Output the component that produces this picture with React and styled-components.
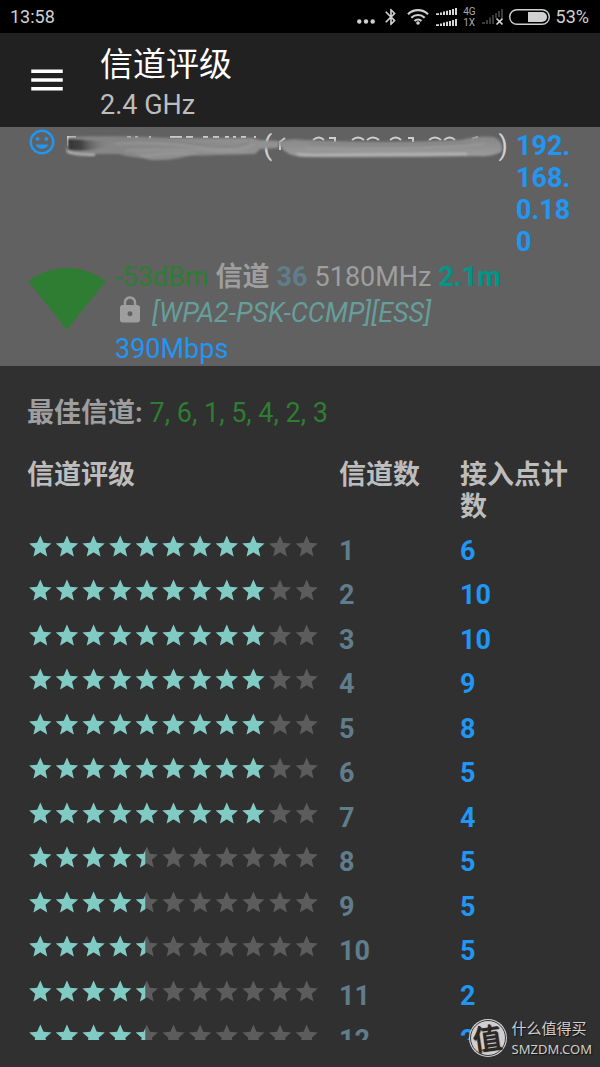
import React from 'react';
import styled, { createGlobalStyle } from 'styled-components';
import { MdBluetooth, MdInsertEmoticon, MdLock, MdMenu, MdSignalWifi4Bar } from 'react-icons/md';

const GlobalStyle = createGlobalStyle`
    * {
        box-sizing: border-box;
    }

    body {
        margin: 0;
        background: #303030;
        color: #bdbdbd;
        font-family: Roboto, 'Noto Sans CJK SC', sans-serif;
        font-size: 27px;
        line-height: 32px;
    }

    svg {
        display: block;
        flex: none;
    }
`;

const Screen = styled.div`
    position: relative;
    display: flex;
    flex-direction: column;
    height: 100vh;
    overflow: hidden;
`;

const StatusBar = styled.div`
    display: flex;
    flex: none;
    align-items: center;
    justify-content: space-between;
    height: 33px;
    padding: 0 11px 0 10px;
    background: #000;
    color: #d0d0d0;
    font-size: 18px;
`;

const StatusIcons = styled.div`
    display: flex;
    align-items: center;
    gap: 6px;
`;

const NetworkLabels = styled.div`
    color: #a8a8a8;
    font-size: 10px;
    line-height: 11px;
`;

const AppBar = styled.header`
    display: flex;
    flex: none;
    align-items: center;
    gap: 32px;
    height: 94px;
    padding-left: 26px;
    background: #212121;
`;

const MenuButton = styled.button`
    padding: 0;
    border: 0;
    background: none;
    color: #fff;
`;

const Heading = styled.div`
    padding-top: 6px;
`;

const Title = styled.h1`
    margin: 0;
    color: #fff;
    font-size: 33px;
    font-weight: 400;
    line-height: 44px;
`;

const Subtitle = styled.p`
    margin: 0;
    font-size: 27px;
    line-height: 36px;
`;

const Connection = styled.section`
    flex: none;
    height: 239px;
    padding: 0 27px;
    overflow: hidden;
    background: #616161;
`;

const NameRow = styled.div`
    display: flex;
    gap: 8px;
    color: #2196f3;
`;

const NetworkName = styled.div`
    position: relative;
    display: flex;
    flex: 1;
    justify-content: space-between;
    padding: 3px 0 0 198px;
    color: #d0d0d0;
`;

const Smear = styled.svg`
    position: absolute;
    top: 4px;
    left: 0;
    width: 100%;
`;

const IpAddress = styled.div`
    width: 57px;
    padding-top: 3px;
    font-weight: 700;
    word-break: break-all;
`;

const DetailRow = styled.div`
    display: flex;
    gap: 8px;
    color: #2e7d32;
`;

const Details = styled.div`
    padding-top: 1px;
    line-height: 36px;
`;

const DetailLine = styled.div`
    display: flex;
    align-items: center;
    gap: 7px;
    white-space: nowrap;
`;

const LockIcon = styled(MdLock)`
    align-self: flex-start;
    color: #9e9e9e;
`;

const Value = styled.span`
    color: ${({ $color }) => $color || '#9e9e9e'};
    font-weight: ${({ $bold }) => ($bold ? 700 : 400)};
    font-style: ${({ $italic }) => ($italic ? 'italic' : 'normal')};
`;

const Rating = styled.main`
    flex: 1;
    min-height: 0;
    margin-bottom: 27px;
    padding: 31px 27px 0;
    overflow: hidden;
`;

const BestChannels = styled.p`
    display: flex;
    gap: 7px;
    margin: 0 0 30px;
`;

const Table = styled.table`
    width: 100%;
    border-collapse: collapse;
    table-layout: fixed;

    th,
    td {
        padding: 0;
        text-align: left;
        vertical-align: top;
    }

    th {
        padding-bottom: 10px;
        font-weight: 700;
    }

    tbody tr {
        height: 44px;
    }

    tbody tr:nth-child(even) {
        height: 45px;
    }
`;

const Column = styled.col`
    width: ${({ $width }) => $width};
`;

const NumberCell = styled.td`
    color: ${({ $color }) => $color};
    font-weight: 700;

    && {
        padding-top: 2px;
    }
`;

const Watermark = styled.div`
    position: absolute;
    right: 8px;
    bottom: 8px;
    display: flex;
    align-items: center;
    gap: 4px;
    color: #cfcfcf;
    font-size: 15px;
    line-height: 20px;
    text-shadow: 1px 1px 1px #111;
`;

const WatermarkDomain = styled.div`
    font-family: 'Noto Sans', sans-serif;
    font-size: 13px;
`;

const BEST = [7, 6, 1, 5, 4, 2, 3];

const CHANNELS = [
    { channel: 1, stars: 9, count: 6 },
    { channel: 2, stars: 9, count: 10 },
    { channel: 3, stars: 9, count: 10 },
    { channel: 4, stars: 9, count: 9 },
    { channel: 5, stars: 9, count: 8 },
    { channel: 6, stars: 9, count: 5 },
    { channel: 7, stars: 9, count: 4 },
    { channel: 8, stars: 4.44, count: 5 },
    { channel: 9, stars: 4.44, count: 5 },
    { channel: 10, stars: 4.44, count: 5 },
    { channel: 11, stars: 4.44, count: 2 },
    { channel: 12, stars: 4.44, count: 2 },
];

const STAR = 'M12 17.27L18.18 21l-1.64-7.03L22 9.24l-7.19-.61L12 2 9.19 8.63 2 9.24l5.46 4.73L5.82 21z';
const STAR_COUNT = 11;

const Stars = ({ id, value }) => {
    const stars = Array.from({ length: STAR_COUNT }, (_, i) => (
        <path key={i} d={STAR} transform={`translate(${i * 24} 0)`} />
    ));

    return (
        <svg width="293" height="27" viewBox="0 0 264 24" role="img" aria-label={`${value} / ${STAR_COUNT}`}>
            <clipPath id={id}>
                <rect width={value * 24} height="24" />
            </clipPath>
            <g fill="#5c5c5c">{stars}</g>
            <g fill="#80cbc4" clipPath={`url(#${id})`}>
                {stars}
            </g>
        </svg>
    );
};

const SignalBars = () => (
    <svg width="22" height="18" viewBox="0 0 22 18" fill="#d8d8d8">
        {[0, 11].map((y) => (
            <path
                key={y}
                transform={`translate(1 ${y})`}
                d="M0 5.2h3V7H0zM4 4.6h2V7H4zM7 3.6h2V7H7zM10 2.8h2V7h-2zM13 2h2v5h-2zM16 1h2v6h-2zM19 0h2v7h-2z"
            />
        ))}
    </svg>
);

const Status = () => (
    <StatusBar>
        <time>13:58</time>
        <StatusIcons>
            <svg width="18" height="18" viewBox="0 0 18 18" fill="#d0d0d0">
                <circle cx="2.3" cy="13.5" r="2.2" />
                <circle cx="9" cy="13.5" r="2.2" />
                <circle cx="15.7" cy="13.5" r="2.2" />
            </svg>
            <MdBluetooth size={20} />
            <svg width="22" height="18" viewBox="0 0 22 18" fill="none" stroke="#d0d0d0" strokeWidth="2.2">
                <path d="M1 6.2a14.5 14.5 0 0 1 20 0M4.3 9.7a9.7 9.7 0 0 1 13.4 0M7.5 13a5 5 0 0 1 7 0" />
                <circle cx="11" cy="15" r="1.8" fill="#d0d0d0" stroke="none" />
            </svg>
            <SignalBars />
            <NetworkLabels>
                <div>4G</div>
                <div>1X</div>
            </NetworkLabels>
            <svg width="21" height="18" viewBox="0 0 21 18">
                <path
                    fill="#3a3a3a"
                    d="M0 14h3v2H0zM4 12h2v4H4zM7 9.5h2V16H7zM10 7h2v9h-2zM13 5h2v5h-2zM16 3h2v6h-2zM19 1h2v9h-2z"
                />
                <path stroke="#d8d8d8" strokeWidth="1.6" d="M14.5 10.5l6 6M20.5 10.5l-6 6" />
            </svg>
            <svg width="41" height="16" viewBox="0 0 41 16">
                <rect x="0.7" y="0.7" width="39.6" height="14.6" rx="7.3" fill="none" stroke="#d0d0d0" strokeWidth="1.4" />
                <path fill="#d0d0d0" d="M19 3h14a5 5 0 0 1 0 10H19z" />
            </svg>
            <span>53%</span>
        </StatusIcons>
    </StatusBar>
);

const NameSmear = () => (
    <Smear viewBox="0 0 443 32" aria-hidden="true">
        <defs>
            <linearGradient id="smear-left">
                <stop offset="0" stopColor="#8a8a8a" />
                <stop offset="0.2" stopColor="#868686" />
                <stop offset="1" stopColor="#929292" />
            </linearGradient>
            <linearGradient id="smear-dark">
                <stop offset="0" stopColor="#343434" />
                <stop offset="0.3" stopColor="#444" />
                <stop offset="1" stopColor="#868686" stopOpacity="0" />
            </linearGradient>
            <linearGradient id="smear-right" x2="0" y2="1">
                <stop offset="0" stopColor="#868686" />
                <stop offset="0.6" stopColor="#939393" />
                <stop offset="1" stopColor="#9e9e9e" />
            </linearGradient>
            <filter id="smear-soft" x="-10%" y="-50%" width="120%" height="200%">
                <feGaussianBlur stdDeviation="0.8" />
            </filter>
        </defs>
        {/* letter tops that stick out above the stroke */}
        <g stroke="#cfcfcf" strokeWidth="2" fill="none">
            <path d="M3 15V6h8M62 6h4M70 6h3M85 5v3M105 6h12M121 6h7M138 6h5M148 6h6M160 6h4M168 6h3M176 6h5M190 5v2" />
            <path d="M215 19v-8l5-4M248 9q6-5 11 0M264 7h6v4M287 9q6-5 12 0M302 9q6-5 12 0M325 9q6-5 11 0M343 7h5v4M364 9q6-5 12 0M379 9q6-5 11 0M407 8l6-2" />
        </g>
        <g filter="url(#smear-soft)">
            <path
                fill="url(#smear-left)"
                d="M4 6q50-2 100 1h84l6 2 20 1-1 7-18 1-5 5-40 1q-24 1-48 0-26 6-48-1L5 23q-6-3-3-7z"
            />
            <path fill="#8e8e8e" d="M68 21q40-4 66 1-24 8-48 7-12-2-18-8z" />
            <path fill="url(#smear-dark)" d="M3 8q16 0 44 4-16 10-44 7z" />
            <path
                fill="url(#smear-right)"
                d="M214 11q10-4 26-2 80 4 156 0 18-5 33-3 10 5 8 14-7 6-24 5-90 2-176 1-20-2-23-15z"
            />
            <path stroke="#b8b8b8" strokeWidth="2" fill="none" d="M2 20q4 4 28 4M232 23q8 2 40 1t130-1" />
            <path stroke="#a0a0a0" strokeWidth="1" fill="none" d="M75 26q24-5 56-3M50 13q40-3 82 3t56-2M60 20q36-3 120 1M240 17q80 4 180-4" />
            <path stroke="#7e7e7e" strokeWidth="1" fill="none" d="M20 9q70-2 110 4t55-2M245 13q90 3 160-1" />
        </g>
    </Smear>
);

const App = () => (
    <Screen>
        <GlobalStyle />
        <Status />
        <AppBar>
            <MenuButton type="button" aria-label="菜单">
                <MdMenu size={42} />
            </MenuButton>
            <Heading>
                <Title>信道评级</Title>
                <Subtitle>2.4 GHz</Subtitle>
            </Heading>
        </AppBar>
        <Connection>
            <NameRow>
                <MdInsertEmoticon size={30} />
                <NetworkName>
                    <span>(</span>
                    <span>)</span>
                    <NameSmear />
                </NetworkName>
                <IpAddress>192.168.0.180</IpAddress>
            </NameRow>
            <DetailRow>
                <MdSignalWifi4Bar size={80} />
                <Details>
                    <DetailLine>
                        <Value $color="#2e7d32">-53dBm</Value>
                        <Value $bold>信道</Value>
                        <Value $color="#607d8b" $bold>
                            36
                        </Value>
                        <Value>5180MHz</Value>
                        <Value $color="#009688" $bold>
                            2.1m
                        </Value>
                    </DetailLine>
                    <DetailLine>
                        <LockIcon size={30} />
                        <Value $color="#669e9b" $italic>
                            [WPA2-PSK-CCMP][ESS]
                        </Value>
                    </DetailLine>
                    <DetailLine>
                        <Value $color="#2196f3">390Mbps</Value>
                    </DetailLine>
                </Details>
            </DetailRow>
        </Connection>
        <Rating>
            <BestChannels>
                <Value $bold>最佳信道:</Value>
                <Value $color="#2e7d32">{BEST.join(', ')}</Value>
            </BestChannels>
            <Table>
                <colgroup>
                    <Column />
                    <Column $width="121px" />
                    <Column $width="113px" />
                </colgroup>
                <thead>
                    <tr>
                        <th>信道评级</th>
                        <th>信道数</th>
                        <th>接入点计数</th>
                    </tr>
                </thead>
                <tbody>
                    {CHANNELS.map(({ channel, stars, count }) => (
                        <tr key={channel}>
                            <td>
                                <Stars id={`stars-${channel}`} value={stars} />
                            </td>
                            <NumberCell $color="#607d8b">{channel}</NumberCell>
                            <NumberCell $color="#2196f3">{count}</NumberCell>
                        </tr>
                    ))}
                </tbody>
            </Table>
        </Rating>
        <Watermark>
            <svg width="40" height="40" viewBox="0 0 40 40">
                <circle cx="20" cy="19" r="19" fill="#d0d0d0" />
                <circle cx="20" cy="19" r="17.5" fill="none" stroke="#3a3a3a" strokeWidth="1" />
                <text x="19" y="30" fill="#2a2a2a" fontSize="29" textAnchor="middle" transform="rotate(-8 20 20)">
                    值
                </text>
            </svg>
            <div>
                <div>什么值得买</div>
                <WatermarkDomain>SMZDM.COM</WatermarkDomain>
            </div>
        </Watermark>
    </Screen>
);

export default App;
